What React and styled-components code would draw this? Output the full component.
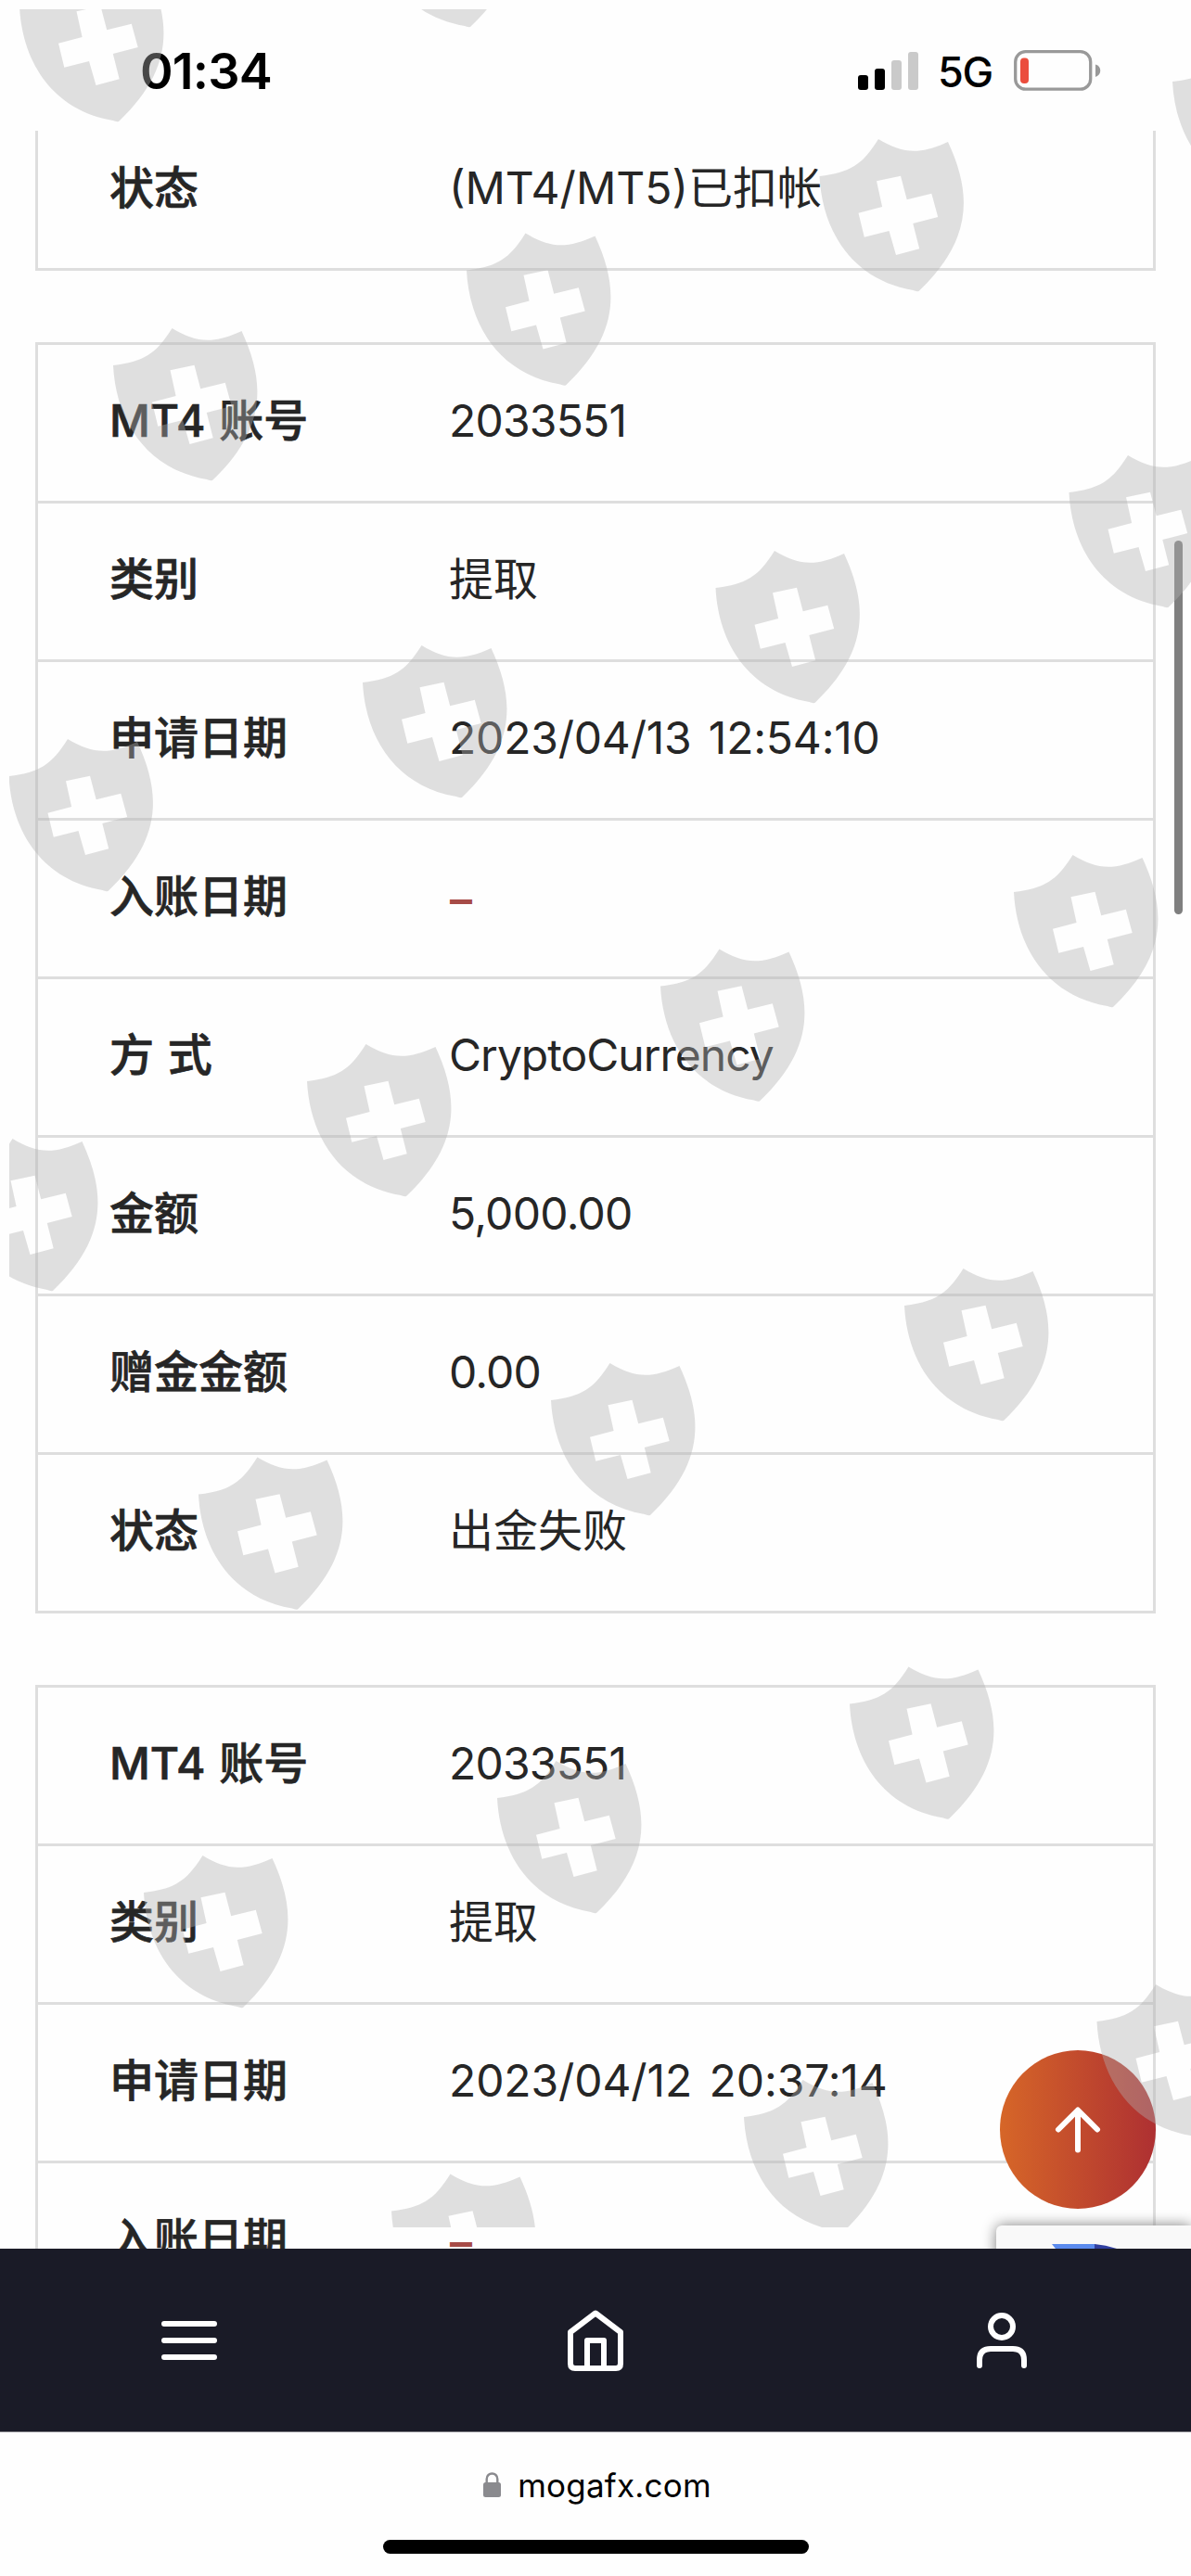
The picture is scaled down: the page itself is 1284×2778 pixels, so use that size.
import React from 'react'
import styled, { createGlobalStyle } from 'styled-components'

const GlobalStyle = createGlobalStyle`
  * {
    box-sizing: border-box;
  }

  body {
    background-color: #fff;
    font-family: Inter, "Noto Sans CJK SC", sans-serif;
    margin: 0;
  }
`

const Screen = styled.div`
  background-color: #fefefe;
  display: flex;
  flex-direction: column;
  height: 2778px;
  overflow: hidden;
  position: relative;
  width: 1284px;
`

const StatusBar = styled.header`
  align-items: flex-start;
  color: #000;
  display: flex;
  flex: none;
  height: 141px;
  justify-content: space-between;
  padding: 53px 97px 0 151px;

  .time {
    font-size: 54px;
    font-weight: 600;
    letter-spacing: -0.8px;
    line-height: 48px;
  }

  .right {
    align-items: center;
    display: flex;
    height: 45px;
  }

  .network {
    font-size: 45px;
    font-weight: 500;
    letter-spacing: -1.2px;
    line-height: 45px;
    margin: 4px 0 0 21px;
    width: 82px;
  }
`

const Viewport = styled.main`
  flex: none;
  height: 2284px;
  overflow: hidden;
  position: relative;
`

const CardList = styled.div`
  display: flex;
  flex-direction: column;
  gap: 77px;
  margin: -23px 38px 0;
`

const Card = styled.ul`
  border: 3px solid #dedede;
  list-style: none;
  margin: 0;
  padding: 0;
`

const Row = styled.li`
  align-items: center;
  border-bottom: ${ props => props.$last ? 'none' : '3px solid #dedede' };
  color: #262626;
  display: flex;
  font-size: 48px;
  height: ${ props => props.$last ? '168px' : '171px' };
  line-height: 72px;
  padding: 0 0 4px 77px;
  white-space: pre;

  .label {
    flex: none;
    font-weight: 500;
    -webkit-text-stroke: 0.7px #262626;
    width: 366px;
    word-spacing: 2px;
  }

  .value {
    font-weight: 400;
    letter-spacing: ${ props => props.$spacing || 0 }px;
    word-spacing: 5px;
  }

  .empty {
    color: #a64b47;
    font-weight: 600;
    padding: 5px 0 0 1px;
  }
`

const ScrollThumb = styled.div`
  background-color: #7f7f7f;
  border-radius: 5px;
  height: 403px;
  position: absolute;
  right: 9px;
  top: 442px;
  width: 9px;
`

const TopButton = styled.button`
  align-items: center;
  background: linear-gradient(90deg, #d66628, #ae3032);
  border: none;
  border-radius: 50%;
  display: flex;
  height: 171px;
  justify-content: center;
  padding: 0;
  position: absolute;
  right: 38px;
  top: 2070px;
  width: 168px;
`

const CaptchaBadge = styled.div`
  background-color: #f9f9f9;
  border-radius: 6px 0 0 0;
  box-shadow: 0 0 15px #808080;
  height: 180px;
  padding: 20px 0 0 60px;
  position: absolute;
  right: 0;
  top: 2259px;
  width: 210px;

  svg {
    display: block;
  }
`

const NavBar = styled.nav`
  align-items: center;
  background-color: #1a1b27;
  border-bottom: 1px solid #7c7c82;
  display: flex;
  flex: none;
  height: 198px;
  justify-content: space-between;
  padding: 0 168px;

  svg {
    display: block;
  }
`

const AddressBar = styled.footer`
  align-items: center;
  display: flex;
  flex-direction: column;
  flex: 1;
  padding-top: 34px;

  .address {
    align-items: center;
    color: #000;
    display: flex;
    font-size: 35px;
    gap: 18px;
    height: 46px;
    letter-spacing: 0.2px;
    line-height: 46px;
    padding-left: 4px;
  }
`

const HomeIndicator = styled.div`
  background-color: #000;
  border-radius: 8px;
  height: 15px;
  margin-top: 36px;
  width: 459px;
`

const Watermark = styled.svg`
  left: 10px;
  pointer-events: none;
  position: absolute;
  top: 10px;
`

const records = [
  [
    { label: '状态', value: '(MT4/MT5)已扣帐' },
  ],
  [
    { label: 'MT4 账号', value: '2033551', spacing: -0.8 },
    { label: '类别', value: '提取' },
    { label: '申请日期', value: '2023/04/13 12:54:10', spacing: -0.2 },
    { label: '入账日期', value: '–', empty: true },
    { label: '方 式', value: 'CryptoCurrency', spacing: -1 },
    { label: '金额', value: '5,000.00', spacing: -0.7 },
    { label: '赠金金额', value: '0.00', spacing: -0.8 },
    { label: '状态', value: '出金失败' },
  ],
  [
    { label: 'MT4 账号', value: '2033551', spacing: -0.8 },
    { label: '类别', value: '提取' },
    { label: '申请日期', value: '2023/04/12 20:37:14', spacing: -0.1 },
    { label: '入账日期', value: '–', empty: true },
  ],
]

const shields = [
  [21, 7], [400, -95],
  [1264, 88], [883.5, 190], [503, 291.5], [122, 394],
  [1152.5, 531], [771.5, 634], [391, 736], [9.5, 837],
  [1093, 962], [712, 1063.5], [331, 1166], [-50, 1268],
  [975, 1408], [594, 1510], [214, 1611.5],
  [916, 1837.5], [536, 1939], [155, 2041],
  [1182.5, 2180], [802, 2283], [422, 2384.5],
]

// shield outline with the cross punched out of it
const shieldPath = `
  M0 0C33 -4 46 -12 63.5 -40C90 -24 108 -23 138.5 -37C164 18 166 68 107 124
  Q104 124.500 101 123C36 112 3 60 0 0Z
  M61.500 5.300L87.500 -0.300L94.200 25.300L120.800 18.700L127.700 44L100.800 51L107.700 78.300
  L82.500 85L75 59L48.300 65.700L42 39.700L67.600 33Z
`

function Signal() {
  return (
    <svg width="65" height="43" viewBox="0 0 65 43">
      <rect x="0" y="27" width="11" height="16" rx="3" />
      <rect x="18" y="20" width="11" height="23" rx="3" />
      <rect x="36" y="11" width="11" height="32" rx="3" fill="#cacaca" />
      <rect x="54" y="2" width="11" height="41" rx="3" fill="#cacaca" />
    </svg>
  )
}

function Battery() {
  return (
    <svg width="94" height="44" viewBox="0 0 94 44">
      <rect x="1.7" y="1.7" width="81" height="40.500" rx="11" fill="none" stroke="#999" strokeWidth="3.3" />
      <rect x="7" y="8.500" width="9" height="27.500" rx="4" fill="#eb4d3d" />
      <path d="M88 15.500C95 17 95 27 88 29Z" fill="#999" />
    </svg>
  )
}

function Record( props ) {
  return (
    <Card>
      { props.rows.map( row => (
        <Row
          key={ row.label }
          $last={ row.label === '状态' }
          $spacing={ row.spacing }
        >
          <span className="label">{ row.label }</span>
          <span className={ row.empty ? 'empty' : 'value' }>{ row.value }</span>
        </Row>
      ) ) }
    </Card>
  )
}

function App() {
  return (
    <Screen>
      <GlobalStyle />
      <StatusBar>
        <span className="time">01:34</span>
        <div className="right">
          <Signal />
          <span className="network">5G</span>
          <Battery />
        </div>
      </StatusBar>

      <Viewport>
        <CardList>
          { records.map( ( rows, index ) => <Record key={ index } rows={ rows } /> ) }
        </CardList>
        <ScrollThumb />
        <TopButton>
          <svg width="50" height="50" viewBox="0 0 50 50" fill="none" stroke="#fff" strokeWidth="6" strokeLinecap="round" strokeLinejoin="round">
            <path d="M25 46.500V4M4 24.500L25 3.500L46 24.500" />
          </svg>
        </TopButton>
        <CaptchaBadge>
          <svg width="72" height="30" viewBox="0 0 72 30">
            <path d="M0 0H46V30H24Z" fill="#5b8bee" />
            <path d="M46 0Q58 1 70 5V30H46Z" fill="#303f9f" />
          </svg>
        </CaptchaBadge>
      </Viewport>

      <NavBar>
        <svg width="72" height="72" viewBox="0 0 72 72" stroke="#fff" strokeWidth="6" strokeLinecap="round">
          <path d="M9 18H63M9 36H63M9 54H63" />
        </svg>
        <svg width="72" height="72" viewBox="0 0 72 72" fill="none" stroke="#fff" strokeWidth="6" strokeLinejoin="round">
          <path d="M9 27L36 6.500L63 27V61Q63 66 58 66H14Q9 66 9 61Z" />
          <path d="M27 66V36H45V66" />
        </svg>
        <svg width="72" height="72" viewBox="0 0 72 72" fill="none" stroke="#fff" strokeWidth="6" strokeLinecap="round">
          <circle cx="36" cy="21" r="12" />
          <path d="M12 63V57Q12 45 24 45H48Q60 45 60 57V63" />
        </svg>
      </NavBar>

      <AddressBar>
        <div className="address">
          <svg width="19" height="28" viewBox="0 0 19 28">
            <rect x="0" y="11" width="19" height="16" rx="2.500" fill="#8a8a8e" />
            <path d="M3.700 12V7.500C3.700 -0.500 15.300 -0.500 15.300 7.500V12" fill="none" stroke="#8a8a8e" strokeWidth="2.400" />
          </svg>
          <span>mogafx.com</span>
        </div>
        <HomeIndicator />
      </AddressBar>

      <Watermark width="1274" height="2392" viewBox="10 10 1274 2392">
        { shields.map( ( [ x, y ] ) => (
          <path
            key={ `${ x }-${ y }` }
            d={ shieldPath }
            transform={ `translate(${ x } ${ y })` }
            fill="#b2b2b2"
            fillOpacity="0.4"
            fillRule="evenodd"
          />
        ) ) }
      </Watermark>
    </Screen>
  )
}

export default App
